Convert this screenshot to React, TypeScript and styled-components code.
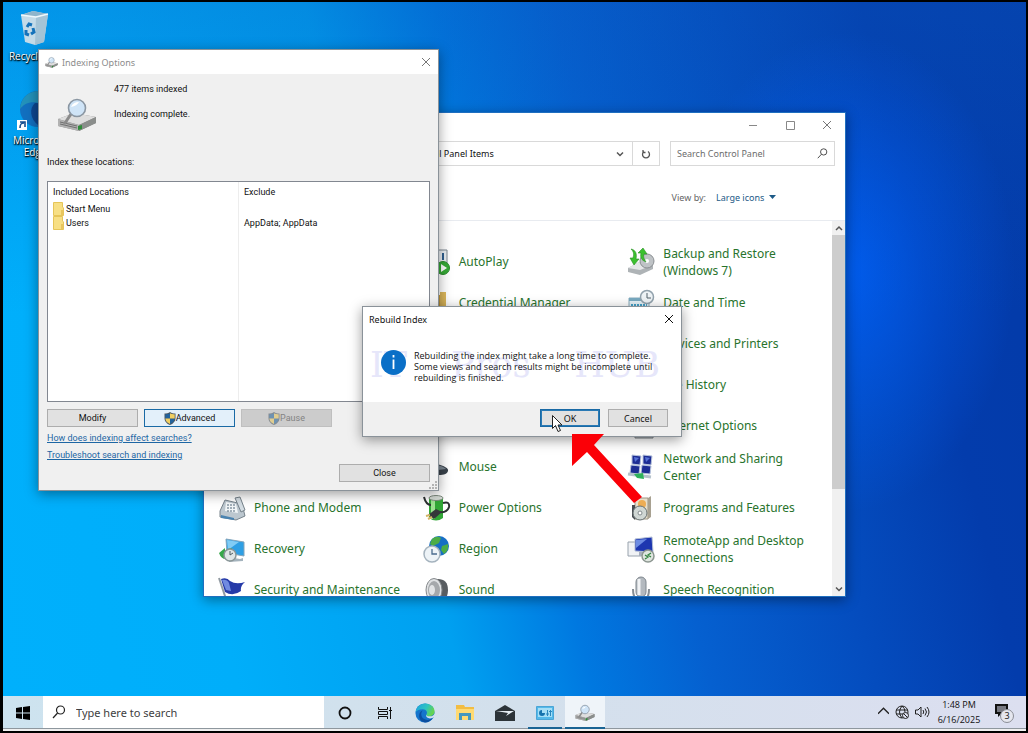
import React, { ReactNode, useState } from "react";
import styled, { createGlobalStyle } from "styled-components";

const GlobalStyle = createGlobalStyle`
  * {
    box-sizing: border-box;
  }

  body {
    margin: 0;
    background-color: #000;
    font-family: "Noto Sans", "Open Sans", sans-serif;
    font-size: 9px;
    color: #111;
  }

  button, input, select {
    font: inherit;
    color: inherit;
  }

  svg {
    display: block;
    flex: none;
  }
`;

const Screen = styled.div`
  display: flex;
  flex-direction: column;
  height: 100vh;
  min-height: 640px;
  border: 2px solid #000;
  border-left-width: 3px;
`;

const Desktop = styled.main`
  position: relative;
  flex: 1;
  overflow: hidden;
  background:
    radial-gradient(ellipse 170px 240px at 842px 270px, rgba(0, 100, 255, 0.75), rgba(0, 90, 240, 0) 100%),
    linear-gradient(180deg, rgba(10, 90, 190, 0.3), rgba(10, 90, 190, 0) 45%),
    linear-gradient(77deg, #00b0fc 0%, #00aefa 20%, #00a0f0 39%, #0078e0 50%, #0560d0 60%, #044cbe 74%, #033cac 86%, #033aa8 100%);
`;

const Shortcut = styled.a<{ $top: number }>`
  position: absolute;
  top: ${({ $top }) => $top}px;
  left: 0;
  display: flex;
  flex-direction: column;
  align-items: center;
  gap: 4px;
  width: 64px;
  color: #fff;
  font-family: "Open Sans", sans-serif;
  font-size: 10px;
  line-height: 12px;
  text-align: center;
  text-decoration: none;
  text-shadow: 0 1px 2px #000, 1px 1px 1px #000;
`;

const Window = styled.section<{ $top: number; $left: number; $width: number; $height: number }>`
  position: absolute;
  top: ${({ $top }) => $top}px;
  left: ${({ $left }) => $left}px;
  display: flex;
  flex-direction: column;
  width: ${({ $width }) => $width}px;
  height: ${({ $height }) => $height}px;
  border: 1px solid #8a9299;
  background-color: #fff;
  box-shadow: 0 3px 12px rgba(0, 0, 0, 0.4);
`;

const PanelWindow = styled(Window)`
  border-color: #1f6fc0;
`;

const TitleBar = styled.header`
  display: flex;
  flex: none;
  align-items: center;
  gap: 4px;
  height: 24px;
  padding: 0 4px 0 6px;
  background-color: #fff;
`;

const Title = styled.h1<{ $muted?: boolean }>`
  flex: 1;
  margin: 0;
  font-size: 9px;
  font-weight: 400;
  color: ${({ $muted }) => ($muted ? "#8c8c8c" : "#111")};
`;

const GlyphBtn = styled.button<{ $width?: number }>`
  display: flex;
  justify-content: center;
  align-items: center;
  width: ${({ $width }) => $width || 16}px;
  height: 100%;
  padding: 0;
  border: 0;
  background: none;
`;

const PanelTitleBar = styled(TitleBar)`
  gap: 5px;
  padding-right: 2px;
`;

const AddressRow = styled.div`
  display: flex;
  gap: 10px;
  height: 25px;
  margin: 4px 10px 0 60px;
`;

const AddressBox = styled.div`
  display: flex;
  flex: 1;
  align-items: center;
  border: 1px solid #d9d9d9;
`;

const Crumb = styled.span`
  flex: 1;
  padding-left: 68px;
  white-space: nowrap;
`;

const RefreshBox = styled.div`
  width: 27px;
  height: 100%;
  border-left: 1px solid #d9d9d9;
`;

const SearchPanel = styled.label`
  display: flex;
  align-items: center;
  width: 165px;
  padding: 0 6px;
  border: 1px solid #d9d9d9;
`;

const PlainInput = styled.input`
  flex: 1;
  min-width: 0;
  padding: 0;
  border: 0;
  outline: 0;
  background: none;

  &::placeholder {
    color: #6d6d6d;
    opacity: 1;
  }
`;

const ViewRow = styled.div`
  display: flex;
  justify-content: flex-end;
  align-items: center;
  gap: 10px;
  height: 55px;
  padding: 8px 69px 0 0;
  border-bottom: 1px solid #e8ebf0;
  color: #666;
`;

const ViewSelect = styled.span`
  display: flex;
  align-items: center;
  gap: 4px;
  color: #1c5a87;

  select {
    padding: 0;
    border: 0;
    appearance: none;
    background: none;
  }
`;

const PanelBody = styled.div`
  display: flex;
  flex: 1;
  min-height: 0;
`;

const ItemGrid = styled.div`
  display: grid;
  flex: 1;
  grid-template-columns: repeat(3, 1fr);
  grid-auto-rows: 41px;
  padding: 20px 0 0 14px;
  overflow: hidden;
`;

const PanelItem = styled.a`
  display: flex;
  align-items: center;
  gap: 8px;
  padding-right: 20px;
  color: #28732c;
  font-size: 12px;
  line-height: 17px;
  text-decoration: none;
`;

const ScrollBar = styled.div`
  display: flex;
  flex-direction: column;
  width: 13px;
  background-color: #f0f0f0;
`;

const ScrollBtn = styled.button`
  display: flex;
  justify-content: center;
  align-items: center;
  height: 14px;
  padding: 0;
  border: 0;
  background: none;
`;

const Thumb = styled.div`
  height: 254px;
  background-color: #cdcdcd;
`;

const Spacer = styled.div`
  flex: 1;
`;

const IndexBody = styled.div`
  position: relative;
  display: flex;
  flex: 1;
  flex-direction: column;
  padding: 7px 8px 8px;
  background-color: #f0f0f0;
  font-family: Roboto, sans-serif;
`;

const Status = styled.div`
  display: flex;
  gap: 17px;
  height: 72px;
  padding-left: 10px;
  line-height: 16px;

  svg {
    margin-top: 14px;
  }

  p {
    margin: 0 0 9px;
  }
`;

const FieldLabel = styled.div`
  height: 28px;
  line-height: 18px;
`;

const ListBox = styled.div`
  height: 221px;
  border: 1px solid #828790;
  background-color: #fff;
`;

const LocationTable = styled.table`
  width: 100%;
  height: 100%;
  border-collapse: collapse;
  table-layout: fixed;

  th, td {
    height: 14px;
    padding: 0 5px;
    font-weight: 400;
    line-height: 14px;
    text-align: left;
  }

  th {
    height: 20px;
  }

  th:first-child, td:first-child {
    border-right: 1px solid #ededed;
  }

  tr:last-child td {
    height: auto;
  }
`;

const Location = styled.span`
  display: flex;
  align-items: center;
  gap: 2px;
`;

const BtnRow = styled.div<{ $end?: boolean }>`
  display: flex;
  justify-content: ${({ $end }) => ($end ? "flex-end" : "flex-start")};
  gap: 6px;
`;

const Btn = styled.button<{ $width: number; $tone?: "hot" | "focus" | "off" }>`
  display: flex;
  justify-content: center;
  align-items: center;
  width: ${({ $width }) => $width}px;
  height: 18px;
  padding: 0;
  border: 1px solid ${({ $tone }) => ($tone === "hot" || $tone === "focus" ? "#1a6aa5" : $tone === "off" ? "#bfbfbf" : "#adadad")};
  background-color: ${({ $tone }) => ($tone === "hot" ? "#e3f0fa" : $tone === "off" ? "#cccccc" : "#e1e1e1")};
  box-shadow: ${({ $tone }) => ($tone === "focus" ? "inset 0 0 0 1px #2a7ab5" : "none")};
  color: ${({ $tone }) => ($tone === "off" ? "#838383" : "#111")};
`;

const HelpLinks = styled.div`
  display: flex;
  flex-direction: column;
  align-items: flex-start;
  margin-top: 3px;
  line-height: 17px;

  a {
    color: #1d66a4;
  }
`;

const Grip = styled.div`
  position: absolute;
  right: 1px;
  bottom: 1px;
`;

const MessageBody = styled.div`
  position: relative;
  flex: 1;
  padding: 19px 18px 0;
`;

const Message = styled.div`
  position: relative;
  display: flex;
  gap: 8px;

  p {
    flex: 1;
    margin: 0;
    font-family: "Open Sans", sans-serif;
    line-height: 11px;
    white-space: nowrap;
  }
`;

const Watermark = styled.div`
  position: absolute;
  top: 14px;
  right: 21px;
  left: 7px;
  display: flex;
  justify-content: space-between;
  color: #e6e6fa;
  font-family: "DejaVu Serif", serif;
  font-size: 35px;
  line-height: 40px;
`;

const MessageFoot = styled.footer`
  display: flex;
  justify-content: flex-end;
  align-items: center;
  gap: 8px;
  height: 34px;
  padding: 0 13px 2px 0;
  background-color: #f0f0f0;
`;

const Overlay = styled.div<{ $top: number; $left: number }>`
  position: absolute;
  top: ${({ $top }) => $top}px;
  left: ${({ $left }) => $left}px;
  pointer-events: none;
`;

const Taskbar = styled.nav`
  display: flex;
  align-items: stretch;
  height: 35px;
  border-bottom: 2px solid #f0f0f0;
  background: linear-gradient(90deg, #cde3ef, #d3e0ec 50%, #dcdff0);
  box-shadow: inset 0 -1px #8e979e;
`;

const TaskBtn = styled.button<{ $active?: boolean; $open?: boolean }>`
  display: flex;
  justify-content: center;
  align-items: center;
  width: ${({ $open }) => ($open ? 34 : 40)}px;
  margin: 0 ${({ $open }) => ($open ? 3 : 0)}px;
  padding: 0;
  border: 0;
  background-color: ${({ $active }) => ($active ? "#eff4f9" : "transparent")};
  box-shadow: ${({ $active, $open }) => ($active || $open ? "inset 0 -2px #1a6494" : "none")};
`;

const TaskSearch = styled.label`
  display: flex;
  align-items: center;
  gap: 10px;
  width: 281px;
  margin-right: 1px;
  padding-left: 9px;
  border-bottom: 1px solid #8e979e;
  background-color: #fff;
  font-size: 11px;

  input::placeholder {
    color: #404040;
  }
`;

const Tray = styled.div`
  display: flex;
  align-items: center;
  gap: 6px;
  margin-left: auto;
  padding: 0 11px 2px 0;
`;

const Clock = styled.time`
  width: 46px;
  margin-right: 6px;
  font-family: "Open Sans", sans-serif;
  line-height: 15px;
  text-align: center;
`;

const Stroke = ({ d, size = 10, color = "#555", width = 1 }: { d: string; size?: number; color?: string; width?: number }) => (
  <svg width={size} height={size} viewBox="0 0 10 10" fill="none" stroke={color} strokeWidth={width}>
    <path d={d} />
  </svg>
);

const Lens = ({ size, color = "#222" }: { size: number; color?: string }) => (
  <svg width={size} height={size} viewBox="0 0 14 14" fill="none" stroke={color} strokeWidth="1.2">
    <circle cx="8.5" cy="5" r="4" />
    <path d="M5.6 8 1 13" />
  </svg>
);

const DriveLens = ({ size }: { size: number }) => (
  <svg width={size} height={size} viewBox="0 0 40 34">
    <path d="M1 21 17 15l22 4v6L22 33 1 28z" fill="#888" />
    <path d="M1 21 17 15l22 4-17 8z" fill="#dedede" />
    <path d="M1 21v7l21 5v-6z" fill="#b2b2b2" />
    <path d="m3 24 17 4M3 26l17 4" stroke="#6f6f6f" />
    <path d="m22 27 17-8v6l-17 8z" fill="#8b8e8c" />
    <path d="m21 28 4-1v4l-4 1z" fill="#2f8b3a" />
    <path d="m14 16-6 9" stroke="#8a8a8a" strokeWidth="3" strokeLinecap="round" />
    <circle cx="20" cy="10" r="8.5" fill="#cfe4f7" stroke="#8a96a2" strokeWidth="1.6" />
    <path d="M14 9q2-5 8-5-2 4-8 5z" fill="#fff" />
  </svg>
);

const RecycleBin = () => (
  <svg width="36" height="36" viewBox="0 0 36 36">
    <path d="m4 5 12-4 15 3-4 28-9 3-10-3z" fill="#c4dbe8" />
    <path d="m4 5 15 2 12-3-15-3z" fill="#8fb5cb" />
    <path d="m19 7 12-3-4 28-9 3z" fill="#a5c4d6" />
    <path d="m4 5 15 2 12-3" fill="none" stroke="#eff8fc" strokeWidth="1.300" />
    <path d="m10 17 2-3 3 1M16 18l1 4-3 2M12 25l-3-1v-4" fill="none" stroke="#1673bb" strokeWidth="3" />
  </svg>
);

const EdgeLogo = ({ size }: { size: number }) => (
  <svg width={size} height={size} viewBox="0 0 24 24">
    <defs>
      <linearGradient id="edgeTop" x1="0" y1="0" x2="1" y2="0.4">
        <stop offset="0" stopColor="#1d9ee2" />
        <stop offset="0.6" stopColor="#2cc4c0" />
        <stop offset="1" stopColor="#65d352" />
      </linearGradient>
    </defs>
    <circle cx="12" cy="12" r="11.5" fill="#1574cc" />
    <path d="M.6 11C1.500 4 6.500.5 12.500.5 19 .5 23.500 5 23.500 10c0 4-3 6-6.500 6-3 0-4-1.200-3.300-2.200 1.800-2.400.2-6.300-4.200-6.300C4.500 7.500 1.500 9.500.6 11z" fill="url(#edgeTop)" />
    <path d="M9.500 9c-3 2.500-2.500 7.500 1 10 3.500 2.400 8 1.400 11-1.500-2 4-6 6-9.500 6-5-1-7.500-5-7-9 .4-3 2-5 4.500-5.500z" fill="#0c4fa0" />
    <path d="M13.500 14c-1 2 1 4.500 4.500 4.500 2 0 3.500-.5 5.500-2l1-5c-1.500 3.500-4.500 4.700-7 4.500-2.500 0-3.800-.8-4-2z" fill="#d3e2ed" />
  </svg>
);

const ShortcutEdge = () => (
  <svg width="40" height="40" viewBox="0 0 40 40">
    <circle cx="23" cy="19" r="18" fill="#1270c0" />
    <path d="M5 19C6 7 14 1 24 1c9 0 16 6 17 14L24 13C15 11 9 14 5 19z" fill="#2392bb" />
    <path d="M20 13c-6 5-5 16 3 22 5 3 12 1 17-4V14z" fill="#0d4791" />
    <path d="M2 30h10v10H2z" fill="#fff" />
    <path d="M5 38c0-4 1-5 4-5M5 32h5v5" fill="none" stroke="#174f90" strokeWidth="1.600" />
  </svg>
);

const Shield = ({ faded }: { faded?: boolean }) => (
  <svg width="12" height="13" viewBox="0 0 12 13" opacity={faded ? 0.55 : 1}>
    <path d="M6 0C4.500 1.200 2.500 1.500.5 1.500V6c0 3.500 2.500 5.800 5.500 7 3-1.200 5.500-3.500 5.500-7V1.500C9.500 1.500 7.500 1.200 6 0z" fill="#4b5660" />
    <path d="M6 1.200V6.500H1.300V2.300C3 2.200 4.700 2 6 1.200zM6 6.500h4.700C10.500 9.200 8.500 11 6 12z" fill="#23639c" />
    <path d="M6 1.200C7.300 2 9 2.200 10.700 2.300V6.500H6zM1.300 6.500H6V12C3.500 11 1.500 9.200 1.300 6.500z" fill="#f1cf61" />
  </svg>
);

const Folder = () => (
  <svg width="11" height="14" viewBox="0 0 11 14">
    <path d="M.5.5h9v4.500l1 1v7.500H.5z" fill="#f7df84" stroke="#e6c558" />
    <path d="M8 8h2.500v5H8z" fill="#e8c65e" />
  </svg>
);

const Chevron = ({ up }: { up?: boolean }) => <Stroke d={up ? "M2 7 5 4l3 3" : "M2 3.500 5 6.500l3-3"} width={1.5} />;

// 28px drawings used by the large icon view
const art: Record<string, ReactNode> = {
  autoplay: (
    <>
      <path d="M4 2h20v22H4z" fill="#e9eef2" stroke="#7d8790" />
      <path d="M20 5v7" stroke="#2f5f8f" strokeWidth="2" />
      <circle cx="20" cy="20" r="6.500" fill="#36a936" stroke="#2b8a2e" />
      <path d="m18 16 6 4-6 4z" fill="#fff" />
    </>
  ),
  backup: (
    <>
      <path d="M1 20 12 14l14 3v4l-13 6-12-3z" fill="#aeb3b6" />
      <path d="m1 20 11-6 14 3-13 5z" fill="#e5e7e8" />
      <circle cx="20" cy="13" r="7" fill="#bfc3c6" stroke="#8b8f93" />
      <circle cx="20" cy="13" r="2" fill="#fff" />
      <path d="M4 1c5 1 6 5 5 10h3l-5 6-4-7h3c1-4 1-6-2-9zM19 14c-5-2-6-5-5-9h-3l5-5 4 6h-3c-1 3 0 5 2 8z" fill="#3cc12f" stroke="#2a8f25" strokeWidth=".6" />
    </>
  ),
  credential: (
    <>
      <path d="M3 6h19v19H3z" fill="#c79a3a" />
      <path d="M17 3h6v23h-6z" fill="#dcb75b" />
    </>
  ),
  date: (
    <>
      <path d="M2 9h20v18H2z" fill="#e4f1f7" stroke="#8aacbc" />
      <path d="M2 9h20v3H2z" fill="#78a9c0" />
      <path d="M4 16h16M4 20h16" stroke="#44a2c9" strokeWidth="2" strokeDasharray="2 1" />
      <circle cx="20" cy="8" r="6.500" fill="#eef3f6" stroke="#92a2ad" strokeWidth="1.500" />
      <path d="M20 4v5h4" fill="none" stroke="#53616b" />
    </>
  ),
  internet: (
    <>
      <circle cx="14" cy="12" r="10" fill="#3a9cd8" />
      <path d="M8 22h18v4H8z" fill="#b9bec2" stroke="#7f858a" />
    </>
  ),
  mouse: (
    <>
      <path d="M2 17c0-5 6-8 12-6 7 2 12 4 11 7-1 4-6 4-11 4C7 22 2 21 2 17z" fill="#39424b" />
      <path d="M14 12q6 1 9 4l-8 1z" fill="#7b8791" />
    </>
  ),
  network: (
    <>
      <path d="m5 2 9 1-1 9-8-1zM16 2l9 1-1 9-8-1zM4 12l9 1-1 8-9-1zM15 12l9 1-1 8-9-1z" fill="#1c2c93" stroke="#b7c3dc" />
      <path d="m7 4 5 1-4 4zM18 4l5 1-4 4z" fill="#5672d6" />
      <path d="m1 21 23 3" stroke="#b5c2cb" strokeWidth="3" />
      <path d="m7 21 9-1 1 6-7-1z" fill="#2fb25b" />
    </>
  ),
  phone: (
    <>
      <path d="m2 17 5-11 17 4 3 12-9 4-16-3z" fill="#bcc7cf" stroke="#76828b" />
      <path d="m8 8 10 2 2 9-13-2z" fill="#f2f6f8" />
      <path d="M9 11h8M9 14h8M9 17h9" stroke="#53687a" strokeDasharray="2 1" />
      <path d="m17 4 5-1 5 13-4 2z" fill="#d4dde3" stroke="#76828b" />
      <path d="m3 21 13 3v2L3 24z" fill="#4a83b0" />
    </>
  ),
  power: (
    <>
      <path d="M6 4h14v20q-7 5-14 0z" fill="#31a736" />
      <path d="M8 5h4v20H8z" fill="#9de291" />
      <ellipse cx="13" cy="4" rx="7" ry="2.500" fill="#d5dbd5" stroke="#7f8c80" />
      <path d="M1 3q2 8 7 8M20 9q7-2 6 4-2 6-9 5" fill="none" stroke="#2c3031" strokeWidth="2" />
      <path d="m5 21 8-6 6 3-8 7z" fill="#343839" />
      <path d="m3 22 4-1M5 25l4-2" stroke="#d5b566" strokeWidth="2" />
    </>
  ),
  programs: (
    <>
      <path d="M8 4h13v21H8z" fill="#e8dfcc" stroke="#9b9484" />
      <path d="m21 4 3-2v21l-3 2z" fill="#a8a191" />
      <circle cx="15" cy="10" r="4" fill="#edad55" />
      <path d="M5 11h3v15l-3-3z" fill="#474c50" />
      <circle cx="13" cy="19" r="7" fill="#d0d7d4" stroke="#687173" />
      <circle cx="13" cy="19" r="2" fill="#fff" stroke="#828b8d" />
    </>
  ),
  recovery: (
    <>
      <path d="m8 4 18 3v14l-17-3z" fill="#2e9fe4" stroke="#83a5bc" />
      <path d="m9 5 12 2-11 8z" fill="#81ccf5" />
      <path d="m10 22 12 2 3-1v3l-14 1z" fill="#a4b3bd" />
      <path d="M1 18 7 13v3q3-3 7-3l-3 5q-3 0-4 2l1 4q-5 0-7-6z" fill="#36a84a" />
      <circle cx="12" cy="20" r="6" fill="#dfe5e6" stroke="#8a9698" strokeWidth="1.500" />
      <path d="M12 16v4l3-2" fill="none" stroke="#4f5c61" />
    </>
  ),
  region: (
    <>
      <circle cx="16" cy="11" r="10" fill="#176fc4" />
      <path d="M9 4q5-4 9-1l-2 5-6 3-3-2zM19 11l6-2q1 7-4 10l-3-4z" fill="#4cad47" />
      <circle cx="9" cy="19" r="8" fill="#edf3f7" stroke="#a5b3be" strokeWidth="1.500" />
      <path d="M9 14v5h5" fill="none" stroke="#4b6c8e" strokeWidth="1.300" />
    </>
  ),
  remote: (
    <>
      <path d="M1 7h13v14H1z" fill="#f0f2f5" stroke="#98a2ad" />
      <path d="m8 4 17-2 1 15-18-1z" fill="#1d36b0" stroke="#b4c0d6" />
      <path d="m9 5 11-1L9 13z" fill="#6d8ce3" />
      <path d="M12 17h8v4h-8z" fill="#a7afbc" />
      <circle cx="21" cy="21" r="6" fill="#dfe6df" stroke="#8c9690" strokeWidth="1.500" />
      <path d="m18 20 3 2-3 2M24 18l-3 2 3 2" fill="none" stroke="#338541" strokeWidth="1.300" />
    </>
  ),
  security: (
    <>
      <path d="m1 2 8 24" stroke="#929ba2" strokeWidth="2" />
      <path d="M3 3q6-2 9 2 6 4 15 1-5 4-4 9-8 6-16 1z" fill="#253aa8" />
      <path d="M4 4q5-1 7 3l2 8-5-1z" fill="#718be0" />
    </>
  ),
  sound: (
    <>
      <path d="M13 3q12-1 12 11t-12 12z" fill="#595d61" />
      <ellipse cx="11" cy="14" rx="8" ry="11.500" fill="#dfe1e3" stroke="#85898c" />
      <ellipse cx="11" cy="14" rx="6" ry="9" fill="#a5a8ab" />
      <ellipse cx="9" cy="14" rx="3" ry="5" fill="#e1e3e5" />
    </>
  ),
  speech: (
    <>
      <rect x="9" y="1" width="10" height="20" rx="5" fill="#b3b9bf" stroke="#7f878e" />
      <path d="M12 3v16" stroke="#f1f3f5" strokeWidth="3" />
      <path d="M6 13q0 12 8 12t8-12M14 24v4" fill="none" stroke="#858d94" strokeWidth="2" />
    </>
  ),
};

const panelItems: [string, string][] = [
  ["Administrative Tools", ""],
  ["AutoPlay", "autoplay"],
  ["Backup and Restore (Windows 7)", "backup"],
  ["Color Management", ""],
  ["Credential Manager", "credential"],
  ["Date and Time", "date"],
  ["Default Programs", ""],
  ["Device Manager", ""],
  ["Devices and Printers", ""],
  ["Ease of Access Center", ""],
  ["File Explorer Options", ""],
  ["File History", ""],
  ["Fonts", ""],
  ["Indexing Options", ""],
  ["Internet Options", "internet"],
  ["Keyboard", ""],
  ["Mouse", "mouse"],
  ["Network and Sharing Center", "network"],
  ["Phone and Modem", "phone"],
  ["Power Options", "power"],
  ["Programs and Features", "programs"],
  ["Recovery", "recovery"],
  ["Region", "region"],
  ["RemoteApp and Desktop Connections", "remote"],
  ["Security and Maintenance", "security"],
  ["Sound", "sound"],
  ["Speech Recognition", "speech"],
];

const ControlPanel = () => (
  <PanelWindow $top={110} $left={200} $width={643} $height={485} aria-label="All Control Panel Items">
    <PanelTitleBar>
      <Spacer />
      <GlyphBtn $width={32} aria-label="Minimize"><Stroke d="M1 5.500h8" color="#888" /></GlyphBtn>
      <GlyphBtn $width={32} aria-label="Maximize"><Stroke d="M1.500 1.500h8v8h-8z" color="#888" /></GlyphBtn>
      <GlyphBtn $width={32} aria-label="Close"><Stroke d="m1 1 8 8M9 1 1 9" color="#777" /></GlyphBtn>
    </PanelTitleBar>
    <AddressRow>
      <AddressBox>
        <Crumb>Control Panel › All Control Panel Items</Crumb>
        <GlyphBtn $width={24} aria-label="Previous locations"><Chevron /></GlyphBtn>
        <RefreshBox>
          <GlyphBtn $width={26} aria-label="Refresh">
            <Stroke d="M3 2.500A3.500 3.500 0 1 0 7 2.500M2 1v2.500h2.500" width={1.3} />
          </GlyphBtn>
        </RefreshBox>
      </AddressBox>
      <SearchPanel>
        <PlainInput aria-label="Search Control Panel" placeholder="Search Control Panel" />
        <Lens size={11} color="#444" />
      </SearchPanel>
    </AddressRow>
    <ViewRow>
      <label htmlFor="view">View by:</label>
      <ViewSelect>
        <select id="view"><option>Large icons</option></select>
        <svg width="7" height="4"><path d="M0 0h7L3.500 4z" fill="#1c5a87" /></svg>
      </ViewSelect>
    </ViewRow>
    <PanelBody>
      <ItemGrid>
        {panelItems.map(([name, icon]) => (
          <PanelItem href="#" key={name}>
            <svg width="28" height="28" viewBox="0 0 28 28">{art[icon]}</svg>
            <span>{name}</span>
          </PanelItem>
        ))}
      </ItemGrid>
      <ScrollBar>
        <ScrollBtn aria-label="Scroll up"><Chevron up /></ScrollBtn>
        <Thumb />
        <Spacer />
        <ScrollBtn aria-label="Scroll down"><Chevron /></ScrollBtn>
      </ScrollBar>
    </PanelBody>
  </PanelWindow>
);

const IndexingOptions = () => (
  <Window $top={47} $left={35} $width={401} $height={442}>
    <TitleBar>
      <DriveLens size={13} />
      <Title $muted>Indexing Options</Title>
      <GlyphBtn aria-label="Close"><Stroke d="m1 1 8 8M9 1 1 9" color="#777" /></GlyphBtn>
    </TitleBar>
    <IndexBody>
      <Status>
        <DriveLens size={40} />
        <div>
          <p>477 items indexed</p>
          <p>Indexing complete.</p>
        </div>
      </Status>
      <FieldLabel>Index these locations:</FieldLabel>
      <ListBox>
        <LocationTable>
          <thead>
            <tr><th>Included Locations</th><th>Exclude</th></tr>
          </thead>
          <tbody>
            <tr><td><Location><Folder />Start Menu</Location></td><td /></tr>
            <tr><td><Location><Folder />Users</Location></td><td>AppData; AppData</td></tr>
            <tr><td /><td /></tr>
          </tbody>
        </LocationTable>
      </ListBox>
      <Spacer />
      <BtnRow>
        <Btn $width={91}>Modify</Btn>
        <Btn $width={91} $tone="hot"><Shield />Advanced</Btn>
        <Btn $width={91} $tone="off" disabled><Shield faded />Pause</Btn>
      </BtnRow>
      <HelpLinks>
        <a href="#">How does indexing affect searches?</a>
        <a href="#">Troubleshoot search and indexing</a>
      </HelpLinks>
      <BtnRow $end><Btn $width={91}>Close</Btn></BtnRow>
      <Grip>
        <svg width="8" height="8" fill="#b3b3b3">
          <path d="M6 0h2v2H6zM3 3h2v2H3zM6 3h2v2H6zM0 6h2v2H0zM3 6h2v2H3zM6 6h2v2H6z" />
        </svg>
      </Grip>
    </IndexBody>
  </Window>
);

const RebuildDialog = ({ onClose }: { onClose: () => void }) => (
  <Window $top={304} $left={359} $width={320} $height={131} role="dialog" aria-label="Rebuild Index">
    <TitleBar>
      <Title>Rebuild Index</Title>
      <GlyphBtn aria-label="Close" onClick={onClose}><Stroke d="m1 1 8 8M9 1 1 9" color="#111" /></GlyphBtn>
    </TitleBar>
    <MessageBody>
      <Watermark aria-hidden="true">
        <span>IT</span>
        <span>Pros</span>
        <span>HUB</span>
      </Watermark>
      <Message>
        <svg width="25" height="25" viewBox="0 0 25 25">
          <circle cx="12.500" cy="12.500" r="12.500" fill="#0a6fc7" />
          <path d="M12.500 5v2.500M12.500 9.500V19" stroke="#fff" strokeWidth="1.800" />
        </svg>
        <p>
          Rebuilding the index might take a long time to complete.
          <br />
          Some views and search results might be incomplete until
          <br />
          rebuilding is finished.
        </p>
      </Message>
    </MessageBody>
    <MessageFoot>
      <Btn $width={60} $tone="focus" onClick={onClose}>OK</Btn>
      <Btn $width={60} onClick={onClose}>Cancel</Btn>
    </MessageFoot>
  </Window>
);

const App = () => {
  const [isOpen, setIsOpen] = useState(true);

  return (
    <Screen>
      <GlobalStyle />
      <Desktop>
        <Shortcut href="#" $top={8}><RecycleBin />Recycle Bin</Shortcut>
        <Shortcut href="#" $top={88}><ShortcutEdge />Microsoft Edge</Shortcut>
        <ControlPanel />
        <IndexingOptions />
        {isOpen ? <RebuildDialog onClose={() => setIsOpen(false)} /> : null}
        <Overlay $top={432} $left={569}>
          <svg width="72" height="70"><path d="M0 0h32L22 11l48 52-8 6-47-51L0 32z" fill="#fb0007" /></svg>
        </Overlay>
        <Overlay $top={413} $left={549}>
          <svg width="12" height="18"><path d="M.5.5v13l3-3 2.500 6 2.500-1L6 10h4z" fill="#fff" stroke="#222" /></svg>
        </Overlay>
      </Desktop>
      <Taskbar>
        <TaskBtn aria-label="Start">
          <svg width="14" height="14" viewBox="0 0 14 14"><path d="m0 2 6-1v5.500H0zM7 .9 14 0v6.500H7zM0 7.500h6V13l-6-1zM7 7.500h7V14l-7-.9z" /></svg>
        </TaskBtn>
        <TaskSearch>
          <Lens size={14} />
          <PlainInput aria-label="Search" placeholder="Type here to search" />
        </TaskSearch>
        <TaskBtn aria-label="Cortana">
          <svg width="14" height="14"><circle cx="7" cy="7" r="5.500" fill="none" stroke="#111" strokeWidth="1.800" /></svg>
        </TaskBtn>
        <TaskBtn aria-label="Task View">
          <svg width="14" height="12" fill="none" stroke="#111">
            <path d="M.5 0v2.500h9V0M.5 12V9.500h9V12M.5 4.500h9v3h-9zM12.500 0v12M11 3.500h3" />
          </svg>
        </TaskBtn>
        <TaskBtn aria-label="Microsoft Edge"><EdgeLogo size={20} /></TaskBtn>
        <TaskBtn aria-label="File Explorer">
          <svg width="18" height="16">
            <path d="M0 0h8l1 2h9v13H0z" fill="#f2bd43" />
            <path d="M0 4h18v11H0z" fill="#ffda72" />
            <path d="M3 15V8h12v7h-3v-4H6v4z" fill="#4597be" />
          </svg>
        </TaskBtn>
        <TaskBtn aria-label="Mail">
          <svg width="20" height="16"><path d="m0 6 10-6 10 6v10H0z" fill="#2c3338" /><path d="M1 6h18l-8 5 2-3z" fill="#e5edf3" /></svg>
        </TaskBtn>
        <TaskBtn aria-label="Control Panel" $open>
          <svg width="18" height="14">
            <path d="M.5.5h17v13H.5z" fill="#54b9ea" stroke="#4aa5d6" />
            <path d="M2 2h14v9H2z" fill="#a5def6" />
            <path d="M6 4v3h3a3 3 0 1 1-3-3z" fill="#1673ae" />
            <path d="M11.500 4v6M14.500 4v6M10 8h3M13 5.500h3" stroke="#2a86bd" />
          </svg>
        </TaskBtn>
        <TaskBtn aria-label="Indexing Options" $active><DriveLens size={20} /></TaskBtn>
        <Tray>
          <Stroke d="M0 7 5 2l5 5" size={11} color="#222" width={1.2} />
          <svg width="14" height="14" fill="none" stroke="#222">
            <circle cx="7" cy="7" r="6" />
            <path d="M1 5h12M1 9h7M7 1q-5 6 0 12M7 1q3 2 3 6" />
            <circle cx="10.500" cy="10.500" r="3" fill="#dcdff0" />
            <path d="m8.500 8.500 4 4" />
          </svg>
          <svg width="15" height="12" fill="none" stroke="#222">
            <path d="M.5 4h2.500l3-3v10L3 8H.5zM8 4q1.500 2 0 4M10 2.500q3 3.500 0 7M12 1q4 5 0 10" />
          </svg>
          <Clock>1:48 PM<br />6/16/2025</Clock>
          <svg width="21" height="22">
            <path d="M1 3h13v10H7l-3 3v-3H1z" fill="#111" />
            <path d="M3 6h9M3 8h9M3 10h6" stroke="#dcdff0" />
            <circle cx="13" cy="15" r="6.500" fill="#e6e7ef" stroke="#8b8d95" />
            <text x="13" y="18" fontSize="9" textAnchor="middle" fill="#222">3</text>
          </svg>
        </Tray>
      </Taskbar>
    </Screen>
  );
};

export default App;
